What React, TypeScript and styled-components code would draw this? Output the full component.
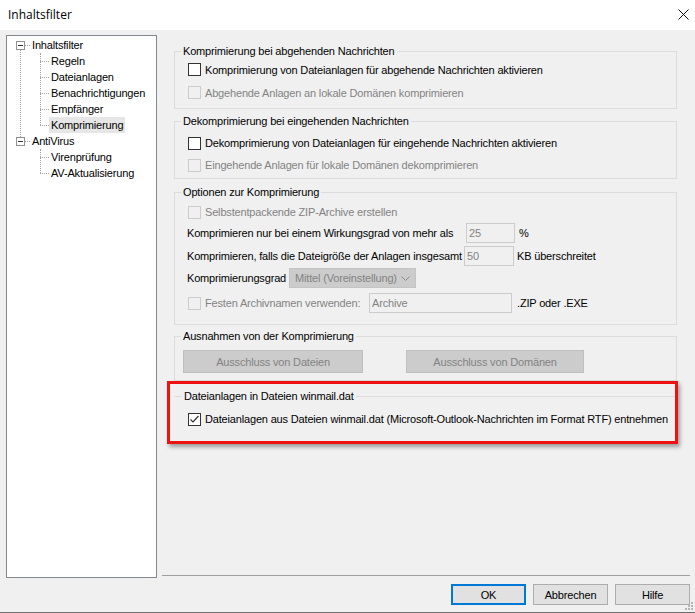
import React from 'react';
import styled, { createGlobalStyle } from 'styled-components';

const GlobalStyle = createGlobalStyle`
  html, body {
    margin: 0;
    padding: 0;
    background: #f0f0f0;
  }
  body {
    font-family: 'Liberation Sans', Arial, sans-serif;
    font-size: 11px;
    letter-spacing: -0.17px;
    color: #000;
  }
  * {
    box-sizing: border-box;
  }
`;

const Window = styled.div`
  position: relative;
  width: 695px;
  height: 613px;
  display: flex;
  flex-direction: column;
  background: #f0f0f0;
  border-bottom: 1px solid #6f6f6f;
  overflow: hidden;
`;

const TitleBar = styled.div`
  height: 30px;
  flex: none;
  background: #fff;
  display: flex;
  align-items: center;
  justify-content: space-between;
  padding: 0 6px 2px 8px;
  font-family: 'Open Sans', 'Noto Sans', sans-serif;
  font-size: 12px;
  letter-spacing: 0;
`;

const Body = styled.div`
  flex: 1;
  display: flex;
  min-height: 0;
`;

/* ---------- tree ---------- */

const Tree = styled.ul`
  width: 151px;
  height: 543px;
  margin: 5px 0 0 6px;
  padding: 1px 0 0;
  list-style: none;
  background: #fff;
  border: 1px solid #828790;
`;

const RootNode = styled.li<{ $last?: boolean }>`
  position: relative;
  &::before {
    content: '';
    display: ${(p) => (p.$last ? 'none' : 'block')};
    position: absolute;
    left: 13px;
    top: 13px;
    bottom: -4px;
    border-left: 1px dotted #a0a0a0;
  }
`;

const ChildList = styled.ul`
  position: relative;
  margin: 0;
  padding: 0;
  list-style: none;
  &::before {
    content: '';
    position: absolute;
    left: 33px;
    top: 0;
    bottom: 8px;
    border-left: 1px dotted #a0a0a0;
  }
`;

const TreeRow = styled.div<{ $indent: number }>`
  height: 16px;
  display: flex;
  align-items: center;
  padding-left: ${(p) => p.$indent}px;
`;

const Expander = styled.span`
  width: 9px;
  height: 9px;
  flex: none;
  border: 1px solid #919191;
  background: #fff;
  display: flex;
  align-items: center;
  justify-content: center;
  &::after {
    content: '';
    width: 5px;
    height: 1px;
    background: #333;
  }
`;

const Connector = styled.span<{ $w: number }>`
  width: ${(p) => p.$w}px;
  flex: none;
  border-top: 1px dotted #a0a0a0;
`;

const TreeLabel = styled.span<{ $selected?: boolean }>`
  height: 16px;
  line-height: 16px;
  padding: 0 2px;
  white-space: nowrap;
  background: ${(p) => (p.$selected ? '#e6e6e6' : 'transparent')};
`;

/* ---------- right side ---------- */

const RightCol = styled.div`
  width: 528px;
  margin-left: 5px;
  display: flex;
  flex-direction: column;
`;

const Content = styled.div`
  flex: 1;
  padding: 15px 13px 0 12px;
  display: flex;
  flex-direction: column;
`;

const Group = styled.fieldset<{ $mt?: number; $open?: boolean }>`
  margin: ${(p) => p.$mt ?? 0}px 0 0;
  padding: 0;
  min-width: 0;
  border: 1px solid ${(p) => (p.$open ? 'transparent' : '#dcdcdc')};
  border-top-color: #dcdcdc;
`;

const Legend = styled.legend<{ $ml?: number }>`
  margin-left: ${(p) => p.$ml ?? 6}px;
  padding: 0 2px;
  line-height: 13px;
  font-size: 11px;
`;

const GroupBody = styled.div<{ $pt: number; $pb: number; $pl?: number }>`
  padding: ${(p) => p.$pt}px 0 ${(p) => p.$pb}px ${(p) => p.$pl ?? 12}px;
  display: flex;
  flex-direction: column;
`;

const Row = styled.div<{ $h: number; $mt?: number }>`
  height: ${(p) => p.$h}px;
  margin-top: ${(p) => p.$mt ?? 0}px;
  display: flex;
  align-items: center;
  white-space: nowrap;
`;

const Box = styled.span<{ $disabled?: boolean }>`
  width: 13px;
  height: 13px;
  flex: none;
  margin: 0 4px 0 1px;
  border: 1px solid ${(p) => (p.$disabled ? '#cccccc' : '#333333')};
  background: ${(p) => (p.$disabled ? '#f0f0f0' : '#fff')};
  display: flex;
  align-items: center;
  justify-content: center;
`;

const Text = styled.span<{ $disabled?: boolean; $w?: number; $ml?: number }>`
  color: ${(p) => (p.$disabled ? '#838383' : '#000')};
  width: ${(p) => (p.$w ? `${p.$w}px` : 'auto')};
  margin-left: ${(p) => p.$ml ?? 0}px;
  flex: none;
`;

const LabelCell = styled.span<{ $w: number }>`
  width: ${(p) => p.$w}px;
  flex: none;
  display: flex;
  align-items: center;
`;

const Field = styled.span<{ $w: number }>`
  width: ${(p) => p.$w}px;
  height: 20px;
  flex: none;
  border: 1px solid #cccccc;
  background: #f0f0f0;
  color: #838383;
  padding-left: 2px;
  display: flex;
  align-items: center;
`;

const Combo = styled.span`
  width: 127px;
  height: 20px;
  flex: none;
  background: #cccccc;
  border: 1px solid #c4c4c4;
  color: #838383;
  padding: 0 5px;
  display: flex;
  align-items: center;
  justify-content: space-between;
`;

const ButtonRow = styled.div`
  display: flex;
  gap: 43px;
`;

const DisabledButton = styled.span<{ $w: number }>`
  width: ${(p) => p.$w}px;
  height: 23px;
  background: #cccccc;
  border: 1px solid #bfbfbf;
  color: #838383;
  display: flex;
  align-items: center;
  justify-content: center;
`;

const Highlight = styled.div`
  margin-left: -7px;
  width: 511px;
  height: 63px;
  border: 3px solid #ee1111;
  padding: 6px 0 0 4px;
  box-shadow: 2px 3px 4px rgba(0, 0, 0, 0.35);
`;

/* ---------- footer ---------- */

const Footer = styled.div`
  border-top: 1px solid #a0a0a0;
  padding: 8px 0 7px;
  display: flex;
  justify-content: flex-end;
  gap: 7px;
`;

const DialogButton = styled.button<{ $default?: boolean }>`
  width: 75px;
  height: 21px;
  margin: 0;
  padding: 0;
  font: inherit;
  letter-spacing: inherit;
  color: #000;
  background: #e1e1e1;
  border: ${(p) => (p.$default ? '2px solid #0078d7' : '1px solid #adadad')};
`;

const Grip = styled.svg`
  position: absolute;
  right: 2px;
  bottom: 2px;
`;

const CheckMark = () => (
  <svg width="11" height="11" viewBox="0 0 11 11">
    <path d="M1.5 5.5 L4 8 L9.5 2" fill="none" stroke="#333" strokeWidth="1.2" />
  </svg>
);

const Check = ({ children, disabled, checked }: { children: any; disabled?: boolean; checked?: boolean }) => (
  <>
    <Box $disabled={disabled}>{checked && <CheckMark />}</Box>
    <Text $disabled={disabled}>{children}</Text>
  </>
);

export default function App() {
  return (
    <Window>
      <GlobalStyle />
      <TitleBar>
        <span>Inhaltsfilter</span>
        <svg width="11" height="11" viewBox="0 0 11 11">
          <path d="M0.5 0.5 L10.5 10.5 M10.5 0.5 L0.5 10.5" stroke="#111" strokeWidth="1" />
        </svg>
      </TitleBar>
      <Body>
        <Tree>
          <RootNode>
            <TreeRow $indent={9}>
              <Expander />
              <Connector $w={5} />
              <TreeLabel>Inhaltsfilter</TreeLabel>
            </TreeRow>
            <ChildList>
              {['Regeln', 'Dateianlagen', 'Benachrichtigungen', 'Empfänger', 'Komprimierung'].map((t) => (
                <li key={t}>
                  <TreeRow $indent={33}>
                    <Connector $w={9} />
                    <TreeLabel $selected={t === 'Komprimierung'}>{t}</TreeLabel>
                  </TreeRow>
                </li>
              ))}
            </ChildList>
          </RootNode>
          <RootNode $last>
            <TreeRow $indent={9}>
              <Expander />
              <Connector $w={5} />
              <TreeLabel>AntiVirus</TreeLabel>
            </TreeRow>
            <ChildList>
              {['Virenprüfung', 'AV-Aktualisierung'].map((t) => (
                <li key={t}>
                  <TreeRow $indent={33}>
                    <Connector $w={9} />
                    <TreeLabel>{t}</TreeLabel>
                  </TreeRow>
                </li>
              ))}
            </ChildList>
          </RootNode>
        </Tree>

        <RightCol>
          <Content>
            <Group>
              <Legend>Komprimierung bei abgehenden Nachrichten</Legend>
              <GroupBody $pt={0} $pb={4}>
                <Row $h={23}>
                  <Check>Komprimierung von Dateianlagen für abgehende Nachrichten aktivieren</Check>
                </Row>
                <Row $h={23}>
                  <Check disabled>Abgehende Anlagen an lokale Domänen komprimieren</Check>
                </Row>
              </GroupBody>
            </Group>

            <Group $mt={6}>
              <Legend>Dekomprimierung bei eingehenden Nachrichten</Legend>
              <GroupBody $pt={4} $pb={2}>
                <Row $h={22}>
                  <Check>Dekomprimierung von Dateianlagen für eingehende Nachrichten aktivieren</Check>
                </Row>
                <Row $h={22}>
                  <Check disabled>Eingehende Anlagen für lokale Domänen dekomprimieren</Check>
                </Row>
              </GroupBody>
            </Group>

            <Group $mt={7}>
              <Legend>Optionen zur Komprimierung</Legend>
              <GroupBody $pt={2} $pb={11}>
                <Row $h={22}>
                  <Check disabled>Selbstentpackende ZIP-Archive erstellen</Check>
                </Row>
                <Row $h={20}>
                  <Text $w={279}>Komprimieren nur bei einem Wirkungsgrad von mehr als</Text>
                  <Field $w={49}>25</Field>
                  <Text $ml={4}>%</Text>
                </Row>
                <Row $h={20} $mt={3}>
                  <Text $w={277}>Komprimieren, falls die Dateigröße der Anlagen insgesamt</Text>
                  <Field $w={50}>50</Field>
                  <Text $ml={3}>KB überschreitet</Text>
                </Row>
                <Row $h={20} $mt={2}>
                  <Text $w={102}>Komprimierungsgrad</Text>
                  <Combo>
                    <span>Mittel (Voreinstellung)</span>
                    <svg width="9" height="5" viewBox="0 0 9 5">
                      <path d="M0.5 0.5 L4.5 4.5 L8.5 0.5" fill="none" stroke="#8a8a8a" strokeWidth="1" />
                    </svg>
                  </Combo>
                </Row>
                <Row $h={20} $mt={5}>
                  <LabelCell $w={182}>
                    <Check disabled>Festen Archivnamen verwenden:</Check>
                  </LabelCell>
                  <Field $w={143}>Archive</Field>
                  <Text $ml={5}>.ZIP oder .EXE</Text>
                </Row>
              </GroupBody>
            </Group>

            <Group $mt={5}>
              <Legend>Ausnahmen von der Komprimierung</Legend>
              <GroupBody $pt={7} $pb={7} $pl={8}>
                <ButtonRow>
                  <DisabledButton $w={180}>Ausschluss von Dateien</DisabledButton>
                  <DisabledButton $w={178}>Ausschluss von Domänen</DisabledButton>
                </ButtonRow>
              </GroupBody>
            </Group>

            <Highlight>
              <Group $open>
                <Legend $ml={7}>Dateianlagen in Dateien winmail.dat</Legend>
                <GroupBody $pt={5} $pb={0}>
                  <Row $h={22}>
                    <Check checked>
                      Dateianlagen aus Dateien winmail.dat (Microsoft-Outlook-Nachrichten im Format RTF) entnehmen
                    </Check>
                  </Row>
                </GroupBody>
              </Group>
            </Highlight>
          </Content>

          <Footer>
            <DialogButton $default>OK</DialogButton>
            <DialogButton>Abbrechen</DialogButton>
            <DialogButton>Hilfe</DialogButton>
          </Footer>
        </RightCol>
      </Body>
      <Grip width="8" height="8" viewBox="0 0 8 8">
        <g fill="#b5b5b5">
          <rect x="6" y="0" width="2" height="2" />
          <rect x="3" y="3" width="2" height="2" />
          <rect x="6" y="3" width="2" height="2" />
          <rect x="0" y="6" width="2" height="2" />
          <rect x="3" y="6" width="2" height="2" />
          <rect x="6" y="6" width="2" height="2" />
        </g>
      </Grip>
    </Window>
  );
}
